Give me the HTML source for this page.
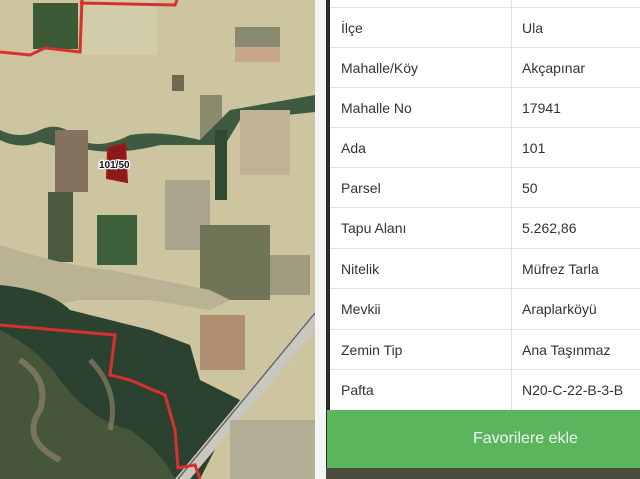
<!DOCTYPE html>
<html><head><meta charset="utf-8"><style>
body{margin:0;width:640px;height:479px;overflow:hidden;background:#fff;font-family:"Liberation Sans",sans-serif;position:relative}
#map{position:absolute;left:0;top:0}
#gap{position:absolute;left:315px;top:0;width:11px;height:479px;background:#f4f4f2}
#edge{position:absolute;left:326px;top:0;width:4px;height:479px;background:#2a2a28}
#tbl{position:absolute;left:330px;top:0;width:310px;height:410px;background:#fff}
.r{position:absolute;left:0;width:310px;height:40px;border-top:1px solid #e2e2e2;font-size:14px;color:#333}
.r span{position:absolute;top:12px}
.a{left:11px}.b{left:192px}
#div{position:absolute;left:511px;top:0;width:1px;height:410px;background:#e2e2e2}
#btn{position:absolute;left:327px;top:410px;width:313px;height:58px;background:#5bb55c;color:#eef8ee;font-size:16px}
#btn span{position:absolute;left:146px;top:20px}
#bot{position:absolute;left:326px;top:468px;width:314px;height:11px;background:#4a4a3e}
</style></head><body>
<svg id="map" width="315" height="479" viewBox="0 0 315 479">
<rect width="315" height="479" fill="#cdc4a0"/>
<rect x="33" y="3" width="45" height="46" fill="#3d5a36"/>
<rect x="82" y="0" width="75" height="55" fill="#d3ccaa"/>
<rect x="235" y="27" width="45" height="20" fill="#8a8a70"/>
<rect x="235" y="47" width="45" height="15" fill="#c9a88a"/>
<rect x="172" y="75" width="12" height="16" fill="#6f6a52"/>
<rect x="200" y="95" width="22" height="50" fill="#8c8a6d"/>
<path d="M0 130 Q20 140 40 130 Q60 120 80 140 Q100 150 130 135 Q160 130 200 140 L230 110 L315 95 L315 112 L240 120 L225 145 L160 145 Q120 155 90 150 Q60 148 40 142 Q20 150 0 140Z" fill="#3e5a40"/>
<rect x="55" y="130" width="33" height="62" fill="#84715e"/>
<rect x="48" y="192" width="25" height="70" fill="#4a5a3e"/>
<rect x="97" y="215" width="40" height="50" fill="#3c5e38"/>
<rect x="165" y="180" width="45" height="70" fill="#a9a48c"/>
<rect x="200" y="225" width="70" height="75" fill="#707558"/>
<rect x="240" y="110" width="50" height="65" fill="#bfb295"/>
<rect x="215" y="130" width="12" height="70" fill="#2f4a30"/>
<rect x="270" y="255" width="40" height="40" fill="#a09a80"/>
<path d="M0 245 Q60 265 110 270 L210 290 L230 300 L210 310 L150 300 L80 300 Q40 310 0 300Z" fill="#b9b393"/>
<path d="M0 285 Q50 290 70 310 L150 330 L190 345 L200 380 L240 400 L200 479 L0 479Z" fill="#2c4230"/>
<path d="M0 330 Q40 350 60 380 Q90 420 130 430 Q160 450 175 479 L0 479Z" fill="#45563b"/>
<path d="M20 360 Q50 380 40 410 Q20 440 60 460" stroke="#9a8a6e" stroke-width="6" fill="none" opacity=".6"/>
<path d="M90 360 Q120 390 110 430" stroke="#9a8a6e" stroke-width="5" fill="none" opacity=".6"/>
<rect x="200" y="315" width="45" height="55" fill="#b09070"/>
<path d="M315 310 L175 479 L190 479 L315 330Z" fill="#c8c8c0"/>
<path d="M315 313 L178 479" stroke="#6a6a60" stroke-width="1.5"/>
<rect x="230" y="420" width="85" height="59" fill="#b2ad95"/>
<path d="M0 52 L30 55 L45 48 L80 52 L82 0 M80 3 L175 5 L177 0" stroke="#d83030" stroke-width="3" fill="none"/>
<path d="M0 325 L115 335 L110 375 L130 380 L165 395 L175 430 L178 468 L195 465 L200 479" stroke="#d83030" stroke-width="3" fill="none"/>
<path d="M108 148 L125 144 L127 182 L107 178Z" fill="#8a1a1a" stroke="#a01818" stroke-width="2"/>
<text x="99" y="168" font-size="10" font-family="Liberation Sans" font-weight="bold" fill="#111" stroke="#fff" stroke-width="2.5" paint-order="stroke">101/50</text>
</svg>
<div id="gap"></div><div id="edge"></div>
<div id="tbl">
<div class="r" style="top:7px"><span class="a">İlçe</span><span class="b">Ula</span></div>
<div class="r" style="top:47px"><span class="a">Mahalle/Köy</span><span class="b">Akçapınar</span></div>
<div class="r" style="top:87px"><span class="a">Mahalle No</span><span class="b">17941</span></div>
<div class="r" style="top:127px"><span class="a">Ada</span><span class="b">101</span></div>
<div class="r" style="top:167px"><span class="a">Parsel</span><span class="b">50</span></div>
<div class="r" style="top:207px"><span class="a">Tapu Alanı</span><span class="b">5.262,86</span></div>
<div class="r" style="top:248px"><span class="a">Nitelik</span><span class="b">Müfrez Tarla</span></div>
<div class="r" style="top:288px"><span class="a">Mevkii</span><span class="b">Araplarköyü</span></div>
<div class="r" style="top:329px"><span class="a">Zemin Tip</span><span class="b">Ana Taşınmaz</span></div>
<div class="r" style="top:369px"><span class="a">Pafta</span><span class="b">N20-C-22-B-3-B</span></div>
<div id="div" style="left:181px"></div>
</div>
<div id="btn"><span>Favorilere ekle</span></div>
<div id="bot"></div>
</body></html>
